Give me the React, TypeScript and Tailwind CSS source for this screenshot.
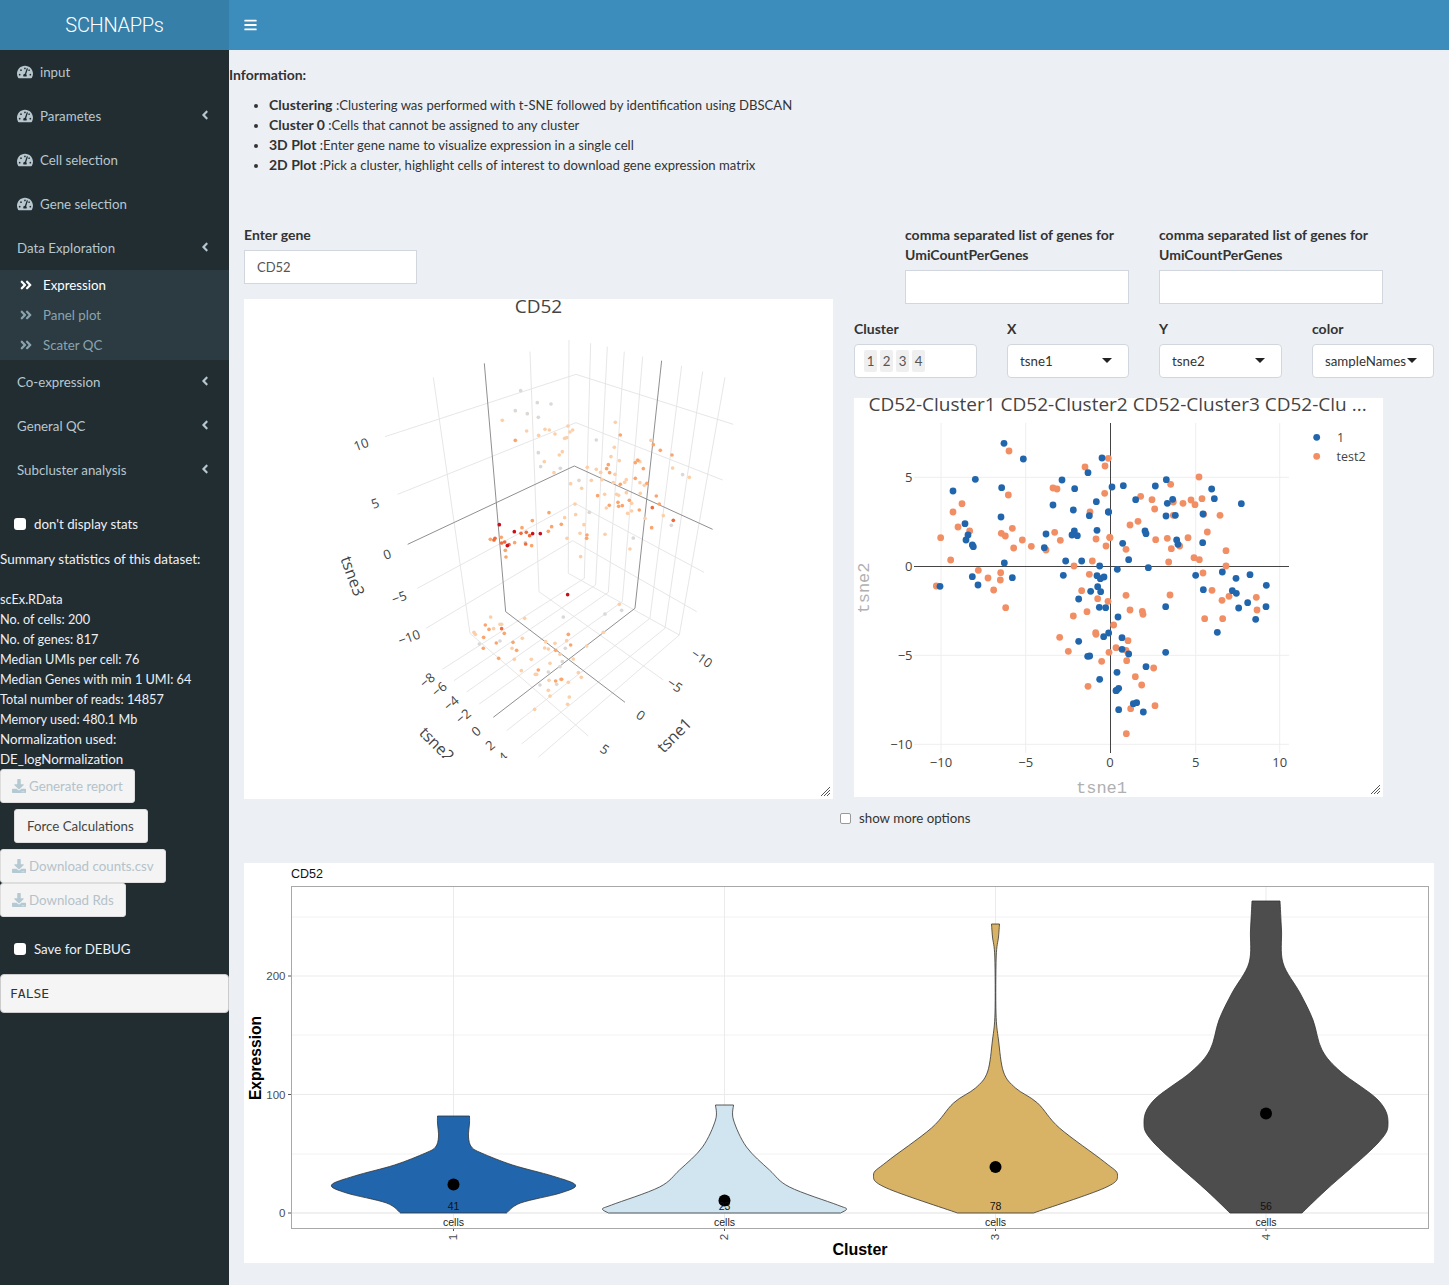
import React from "react";
import { FaAngleDoubleRight, FaAngleLeft, FaBars, FaDownload, FaTachometerAlt } from "react-icons/fa";

type Pt = [number, number];

const BLUE_A: Pt[] = [[462,145],[520,192],[376,253],[309,288],[455,278],[636,255],[674,281],[714,233],[756,189],[609,330],[739,320],[670,345],[718,362],[775,351],[453,366],[345,386],[354,420],[348,435],[367,450],[370,455],[588,417],[673,408],[666,420],[682,422],[741,406],[583,458],[463,504],[647,498],[695,498],[749,513],[367,545],[487,548],[640,541],[741,542],[751,551],[762,546],[384,570],[270,574],[743,575],[722,589],[752,590],[686,612]];
const ORANGE_A: Pt[] = [[477,168],[775,190],[765,213],[705,216],[764,295],[609,279],[621,282],[475,300],[336,326],[309,351],[720,351],[324,396],[359,408],[454,415],[466,423],[487,400],[272,428],[517,435],[614,412],[631,436],[738,432],[491,459],[544,454],[588,465],[768,453],[780,428],[302,495],[727,498],[672,513],[385,526],[452,533],[414,549],[451,555],[718,538],[259,573],[431,585],[695,587],[743,611],[774,619]];
const BLUE_B: Pt[] = [[36,276],[70,272],[166,273],[199,254],[335,282],[343,311],[424,326],[107,314],[218,313],[202,325],[26,351],[198,363],[226,361],[309,357],[135,408],[138,416],[230,435],[234,448],[68,445],[308,443],[86,494],[52,523],[145,518]];
const ORANGE_B: Pt[] = [[297,246],[212,268],[122,304],[156,314],[220,321],[249,325],[273,315],[285,329],[306,311],[164,342],[220,361],[311,358],[360,361],[114,379],[90,390],[322,411],[167,434],[202,430],[264,428],[29,427],[78,463],[214,461],[239,453],[378,467],[282,488],[298,494],[206,501],[378,513]];
const BLUE_C: Pt[] = [[287,46],[367,36],[408,55],[450,44],[499,76],[310,89],[397,92],[409,100],[443,128],[498,140],[416,144],[197,140],[54,171],[467,178],[352,217],[66,233],[66,268],[86,282],[197,277],[138,320],[51,337],[50,391],[56,385],[100,431],[110,428],[56,449],[130,456]];
const ORANGE_C: Pt[] = [[309,39],[336,91],[210,105],[78,106],[366,121],[387,109],[469,112],[471,150],[90,150],[127,154],[129,163],[314,176],[368,176],[41,195],[84,242],[48,263],[78,271],[80,302],[161,324],[106,350],[125,375],[165,437],[92,446],[79,521]];
const BLUE_D: Pt[] = [[748,22],[767,23],[776,99],[761,110],[686,124],[713,169],[719,168],[749,238],[798,272]];
const ORANGE_D: Pt[] = [[467,23],[670,48],[711,35],[629,112],[737,98],[738,103],[655,154],[777,157],[755,184],[714,259]];

const POINTS_3D: { color: string; pts: Pt[] }[] = [
  { color: "#dbd8d5", pts: [[572,152],[622,188],[663,192],[556,212],[592,221],[625,232],[799,300],[625,338],[632,380],[691,385],[1058,404],[747,421],[778,517],[1024,556],[910,594],[586,608],[700,831],[825,822],[875,811],[448,912],[510,903],[706,925],[697,965],[655,996],[630,1035],[680,1033],[690,980]] },
  { color: "#fdcfa8", pts: [[517,241],[590,273],[645,268],[658,270],[675,282],[714,258],[728,270],[720,276],[704,295],[710,293],[626,286],[697,335],[688,345],[643,365],[856,247],[853,322],[843,350],[868,362],[963,301],[1028,384],[1078,412],[772,382],[799,388],[812,397],[855,403],[722,431],[755,445],[784,421],[816,419],[824,463],[850,428],[884,427],[889,419],[889,458],[930,428],[943,436],[931,460],[735,492],[737,524],[704,533],[829,504],[860,463],[866,466],[905,490],[893,520],[905,513],[945,535],[762,554],[750,580],[711,595],[825,583],[900,627],[752,650],[482,831],[510,853],[515,853],[491,866],[432,877],[436,883],[584,835],[577,895],[675,910],[647,905],[710,902],[644,924],[655,927],[690,943],[730,957],[770,918],[820,877],[868,793],[604,958],[553,958],[574,992],[660,970],[616,1003],[620,1003],[745,998],[754,1012],[692,1018],[657,1021],[715,1027],[655,1051],[660,1068],[718,1071],[713,1093],[614,1108],[546,925],[672,398],[922,360],[930,365],[1000,527]] },
  { color: "#fba56d", pts: [[556,301],[871,285],[970,314],[991,331],[1026,345],[916,368],[924,361],[940,386],[835,374],[830,386],[839,398],[871,433],[916,415],[951,430],[803,467],[979,468],[988,492],[864,487],[838,496],[866,499],[877,497],[898,481],[928,510],[965,563],[771,585],[770,595],[657,518],[607,542],[576,563],[694,553],[665,560],[655,574],[481,598],[554,608],[514,592],[526,631],[528,651],[605,617],[466,855],[477,868],[461,892],[499,909],[523,880],[549,907],[560,931],[460,925],[506,955],[677,931],[722,915],[715,883],[625,990],[677,1023],[695,1018]] },
  { color: "#ef6a3c", pts: [[1030,541],[967,503],[589,577],[599,587],[573,580],[587,612],[515,609],[524,606],[537,614],[492,600],[495,595],[515,866]] },
  { color: "#c8101c", pts: [[508,554],[553,575],[631,581],[608,581],[532,617],[713,764]] },
];

const GRID_3D: number[][] = [
  [310,112,420,880],[600,35,627,755],[717,0,715,700],[782,10,763,715],[832,20,797,735],[883,35,835,757],[938,50,877,785],[1055,78,960,835],[1118,95,1005,865],[1185,112,1048,885],
  [165,290,738,103],[203,463,738,248],[262,745,735,490],[288,865,728,602],[738,103,1210,253],[738,248,1178,420],[735,490,1122,697],[728,602,1100,815],
  [763,715,337,988],[797,735,372,1022],[835,757,410,1056],[877,785,448,1092],[960,835,530,1172],[1005,865,575,1212],[1048,885,625,1252],
  [420,880,775,1188],[627,755,1000,1020],[715,700,1048,885],
];
const AXES_3D: number[][] = [[463,70,527,815],[527,815,885,1087],[995,62,915,805],[915,805,490,1132],[233,613,733,378],[733,378,1148,568]];

const LABELS_3D: { t: string; x: number; y: number; r: number; s?: number }[] = [
  { t: "10", x: 361, y: 444, r: -20 }, { t: "5", x: 375, y: 503, r: -20 }, { t: "0", x: 387, y: 554, r: -20 },
  { t: "−5", x: 399, y: 597, r: -20 }, { t: "−10", x: 409, y: 637, r: -20 }, { t: "tsne3", x: 353, y: 576, r: 70, s: 16 },
  { t: "−8", x: 427, y: 680, r: -40 }, { t: "−6", x: 439, y: 689, r: -40 }, { t: "−4", x: 451, y: 703, r: -40 },
  { t: "−2", x: 463, y: 716, r: -40 }, { t: "0", x: 476, y: 731, r: -40 }, { t: "2", x: 490, y: 745, r: -40 }, { t: "4", x: 503, y: 757, r: -40 },
  { t: "tsne2", x: 437, y: 744, r: 45, s: 16 }, { t: "−10", x: 702, y: 658, r: 35 }, { t: "−5", x: 675, y: 685, r: 35 },
  { t: "0", x: 641, y: 715, r: 35 }, { t: "5", x: 605, y: 749, r: 35 }, { t: "tsne1", x: 674, y: 735, r: -45, s: 16 },
];

const VIOLINS: { cx: number; fill: string; n: string; dot: number; prof: Pt[] }[] = [
  { cx: 453.5, fill: "#2166ac", n: "41", dot: 1184.5, prof: [[1116,16],[1123,16],[1137,15],[1147,18],[1153,28],[1165,59],[1176,99],[1185,122],[1193,107],[1203,67],[1213,53]] },
  { cx: 724.5, fill: "#d1e5f0", n: "23", dot: 1200.5, prof: [[1105,9],[1120,9],[1147,22],[1170,45],[1187,65],[1205,113],[1209,122],[1213,116]] },
  { cx: 995.5, fill: "#d8b365", n: "78", dot: 1167, prof: [[924,4],[937,3],[957,0.7],[1013,0.5],[1040,3],[1072,8],[1088,20],[1103,42],[1128,64],[1162,109],[1175,122],[1188,109],[1213,38]] },
  { cx: 1266, fill: "#4d4d4d", n: "56", dot: 1113.5, prof: [[901,14],[930,15.5],[963,17],[993,34],[1020,47],[1050,56],[1072,75],[1100,112],[1122,122],[1143,112],[1190,60],[1213,36]] },
];

// smooth one side of a violin, going through the points in order
function side(pts: Pt[]) {
  let d = "";
  for (let i = 0; i < pts.length - 1; i++) {
    const p0 = pts[Math.max(i - 1, 0)];
    const p1 = pts[i];
    const p2 = pts[i + 1];
    const p3 = pts[Math.min(i + 2, pts.length - 1)];
    d += ` C${p1[0] + (p2[0] - p0[0]) / 6} ${p1[1] + (p2[1] - p0[1]) / 6} ${p2[0] - (p3[0] - p1[0]) / 6} ${p2[1] - (p3[1] - p1[1]) / 6} ${p2[0]} ${p2[1]}`;
  }
  return d;
}

function violinPath(cx: number, prof: Pt[]) {
  const right: Pt[] = prof.map(([y, w]) => [cx + w, y]);
  const left: Pt[] = [...prof].reverse().map(([y, w]) => [cx - w, y]);
  return `M${right[0][0]} ${right[0][1]}${side(right)} L${left[0][0]} ${left[0][1]}${side(left)} Z`;
}

function ResizeHandle() {
  return (
    <svg className="absolute right-[3px] bottom-[3px]" width="9" height="9" viewBox="0 0 9 9">
      <path d="M0 9L9 0M3 9L9 3M6 9L9 6" stroke="#555" strokeWidth="1" fill="none" />
    </svg>
  );
}

function NavItem({ label, icon, arrow }: { label: string; icon?: boolean; arrow?: boolean }) {
  return (
    <div className="h-[44px] flex items-center pl-[17px] pr-[19px] text-[#b8c7ce]">
      {icon && <FaTachometerAlt className="w-[16px] h-[16px] mr-[7px]" />}
      <span className="flex-1">{label}</span>
      {arrow && <FaAngleLeft className="w-[10px] h-[14px] -mt-[3px]" />}
    </div>
  );
}

function SubItem({ label, active }: { label: string; active?: boolean }) {
  return (
    <div className={`h-[30px] flex items-center pl-[19px] ${active ? "text-white" : "text-[#8aa4af]"}`}>
      <FaAngleDoubleRight className="w-[14px] h-[14px] mr-[10px] -mt-[1px]" />
      {label}
    </div>
  );
}

function SideButton({ label, disabled, className }: { label: string; disabled?: boolean; className: string }) {
  return (
    <div className={`h-[34px] flex items-center bg-[#f4f4f4] border border-[#ddd] rounded-[3px] ${disabled ? "text-[#b5c2c9]" : "text-[#444]"} ${className}`}>
      {disabled && <FaDownload className="w-[14px] h-[14px] mr-[3px] text-[#b5c9d3]" />}
      {label}
    </div>
  );
}

function Sidebar() {
  return (
    <aside className="w-[229px] shrink-0 bg-[#222d32]">
      <div className="h-[50px] bg-[#367fa9] flex items-center justify-center text-white text-[20px] font-['Roboto',sans-serif] font-light tracking-[-0.3px]">SCHNAPPs</div>
      <NavItem label="input" icon />
      <NavItem label="Parametes" icon arrow />
      <NavItem label="Cell selection" icon />
      <NavItem label="Gene selection" icon />
      <NavItem label="Data Exploration" arrow />
      <div className="bg-[#2c3b41]">
        <SubItem label="Expression" active />
        <SubItem label="Panel plot" />
        <SubItem label="Scater QC" />
      </div>
      <NavItem label="Co-expression" arrow />
      <NavItem label="General QC" arrow />
      <NavItem label="Subcluster analysis" arrow />
      <label className="mt-[22px] h-[20px] flex items-center pl-[14px] text-[#ecf0f5]">
        <span className="w-[12px] h-[12px] bg-white rounded-[3px] mr-[8px]" />
        don't display stats
      </label>
      <div className="mt-[15px] text-[#ecf0f5] whitespace-nowrap">
        <div className="text-[13.45px]">Summary statistics of this dataset:</div>
        <div className="h-[20px]" />
        <div className="text-[12.7px]">scEx.RData</div>
        <div className="text-[12.7px]">No. of cells: 200</div>
        <div className="text-[12.7px]">No. of genes: 817</div>
        <div className="text-[12.7px]">Median UMIs per cell: 76</div>
        <div className="text-[12.7px]">Median Genes with min 1 UMI: 64</div>
        <div className="text-[12.7px]">Total number of reads: 14857</div>
        <div className="text-[12.7px]">Memory used: 480.1 Mb</div>
        <div>Normalization used:</div>
        <div>DE_logNormalization</div>
      </div>
      <SideButton label="Generate report" disabled className="w-[135px] pl-[11px]" />
      <SideButton label="Force Calculations" className="w-[134px] ml-[14px] mt-[6px] pl-[12px]" />
      <SideButton label="Download counts.csv" disabled className="w-[166px] mt-[6px] pl-[11px]" />
      <SideButton label="Download Rds" disabled className="w-[126px] pl-[11px]" />
      <label className="mt-[22px] h-[20px] flex items-center pl-[14px] text-[#ecf0f5]">
        <span className="w-[12px] h-[12px] bg-white rounded-[3px] mr-[8px]" />
        Save for DEBUG
      </label>
      <div className="mt-[15px] h-[39px] flex items-center pl-[9px] bg-[#f5f5f5] border border-[#ccc] rounded-[4px] text-[#333] text-[13px] font-['DejaVu_Sans_Mono',monospace]">FALSE</div>
    </aside>
  );
}

function Plot3D() {
  return (
    <div className="relative h-[500px] bg-white">
      <svg className="block overflow-hidden" width="589" height="459" viewBox="244 299 589 459">
        <text x="538.5" y="312.5" textAnchor="middle" fontSize="19" fill="#444" fontFamily="'Open Sans', sans-serif">CD52</text>
        <g transform="translate(330 340) scale(0.3333)">
          {GRID_3D.map((l, i) => <line key={i} x1={l[0]} y1={l[1]} x2={l[2]} y2={l[3]} stroke="#e2e2e2" strokeWidth="2.6" />)}
          {AXES_3D.map((l, i) => <line key={i} x1={l[0]} y1={l[1]} x2={l[2]} y2={l[3]} stroke="#8f8f8f" strokeWidth="3" />)}
          {POINTS_3D.map((g) => g.pts.map((p, i) => <circle key={g.color + i} cx={p[0]} cy={p[1]} r="5.5" fill={g.color} />))}
        </g>
        {LABELS_3D.map((l, i) => (
          <text key={i} x={l.x} y={l.y} textAnchor="middle" dominantBaseline="central" fontSize={l.s ?? 13} fill="#444" fontFamily="'Open Sans', sans-serif" transform={`rotate(${l.r} ${l.x} ${l.y})`}>{l.t}</text>
        ))}
      </svg>
      <ResizeHandle />
    </div>
  );
}

function dots(pts: Pt[], ox: number, oy: number, color: string) {
  return pts.map((p, i) => <circle key={color + ox + oy + i} cx={ox + p[0] / 3} cy={oy + p[1] / 3} r="3.4" fill={color} />);
}

function Scatter() {
  const blue = "#2166ac";
  const orange = "#f28e64";
  const axis = { fontSize: 13, fill: "#444", fontFamily: "'Open Sans', sans-serif" };
  return (
    <div className="relative w-[529px] h-[399px] ml-[15px] bg-white">
      <svg className="block" width="529" height="399" viewBox="854 398 529 399">
        <text x="868.5" y="411" fontSize="19" fill="#444" fontFamily="'Open Sans', sans-serif">CD52-Cluster1 CD52-Cluster2 CD52-Cluster3 CD52-Clu ...</text>
        {[941, 1025.7, 1195.7, 1279.7].map((x) => <line key={x} x1={x} x2={x} y1="423" y2="753" stroke="#eee" />)}
        {[477.3, 655.3, 744.3].map((y) => <line key={y} x1="914" x2="1289" y1={y} y2={y} stroke="#eee" />)}
        <line x1="914" x2="1289" y1="566.5" y2="566.5" stroke="#444" />
        <line x1="1110.5" x2="1110.5" y1="423" y2="753" stroke="#444" />
        {dots(ORANGE_A, 850, 395, orange)}
        {dots(BLUE_A, 850, 395, blue)}
        {dots(ORANGE_B, 1100, 395, orange)}
        {dots(BLUE_B, 1100, 395, blue)}
        {dots(ORANGE_C, 1100, 560, orange)}
        {dots(BLUE_C, 1100, 560, blue)}
        {dots(ORANGE_D, 850, 600, orange)}
        {dots(BLUE_D, 850, 600, blue)}
        {[["5", 477], ["0", 566], ["−5", 655], ["−10", 744]].map(([t, y]) => (
          <text key={t} x="912.5" y={Number(y) + 4.5} textAnchor="end" {...axis}>{t}</text>
        ))}
        {[["−10", 941], ["−5", 1025.7], ["0", 1110], ["5", 1195.7], ["10", 1279.7]].map(([t, x]) => (
          <text key={t} x={x} y="767" textAnchor="middle" {...axis}>{t}</text>
        ))}
        <text x="1101.5" y="793" textAnchor="middle" fontSize="17" fill="#b0b0b0" fontFamily="'Liberation Mono', monospace">tsne1</text>
        <text x="869" y="588" textAnchor="middle" fontSize="17" fill="#b0b0b0" fontFamily="'Liberation Mono', monospace" transform="rotate(-90 869 588)">tsne2</text>
        <circle cx="1316.7" cy="437.3" r="3.4" fill={blue} />
        <circle cx="1316.7" cy="456.3" r="3.4" fill={orange} />
        <text x="1337" y="442" fontSize="12.5" fill="#444" fontFamily="'Open Sans', sans-serif">1</text>
        <text x="1336.5" y="461" fontSize="12.5" fill="#444" fontFamily="'Open Sans', sans-serif">test2</text>
      </svg>
      <ResizeHandle />
    </div>
  );
}

function ViolinPlot() {
  const font = "'Liberation Sans', sans-serif";
  return (
    <div className="w-[1190px] h-[400px] ml-[15px] mt-[35px] bg-white">
      <svg className="block" width="1190" height="400" viewBox="244 863 1190 400">
        <text x="291" y="877.5" fontSize="12.5" fill="#111" fontFamily={font}>CD52</text>
        {[917, 1035, 1154].map((y) => <line key={y} x1="291" x2="1428" y1={y} y2={y} stroke="#f2f2f2" />)}
        {[976, 1094.5].map((y) => <line key={y} x1="291" x2="1428" y1={y} y2={y} stroke="#ebebeb" />)}
        <line x1="291" x2="1428" y1="1213" y2="1213" stroke="#ebebeb" strokeWidth="1.5" />
        {VIOLINS.map((v) => <line key={v.cx} x1={v.cx} x2={v.cx} y1="886" y2="1228" stroke="#ebebeb" />)}
        {VIOLINS.map((v) => (
          <g key={v.n}>
            <path d={violinPath(v.cx, v.prof)} fill={v.fill} stroke="#333" strokeWidth="0.8" />
            <circle cx={v.cx} cy={v.dot} r="6" fill="#000" />
            <text x={v.cx} y="1210" textAnchor="middle" fontSize="10.5" fill="#111" fontFamily={font}>{v.n}</text>
            <text x={v.cx} y="1226" textAnchor="middle" fontSize="10.5" fill="#222" fontFamily={font}>cells</text>
            <line x1={v.cx} x2={v.cx} y1="1228" y2="1231" stroke="#555" />
          </g>
        ))}
        <rect x="291.5" y="886.5" width="1137" height="342" fill="none" stroke="#a8a8a8" />
        {[["200", 976], ["100", 1094.5], ["0", 1213]].map(([t, y]) => (
          <g key={t}>
            <text x="285.5" y={Number(y) + 4} textAnchor="end" fontSize="11.5" fill="#4d4d4d" fontFamily={font}>{t}</text>
            <line x1="288" x2="291" y1={y} y2={y} stroke="#555" />
          </g>
        ))}
        {VIOLINS.map((v, i) => (
          <text key={v.cx} x={v.cx + 3.5} y="1237" textAnchor="middle" fontSize="11.5" fill="#4d4d4d" fontFamily={font} transform={`rotate(-90 ${v.cx + 3.5} 1237)`}>{i + 1}</text>
        ))}
        <text x="860" y="1254.5" textAnchor="middle" fontSize="16" fontWeight="bold" fill="#000" fontFamily={font}>Cluster</text>
        <text x="260.5" y="1058" textAnchor="middle" fontSize="15.6" fontWeight="bold" fill="#000" fontFamily={font} transform="rotate(-90 260.5 1058)">Expression</text>
      </svg>
    </div>
  );
}

function Select({ value, className }: { value: string; className: string }) {
  return (
    <div className={`relative h-[34px] flex items-center pl-[12px] bg-white border border-[#d2d6de] rounded-[4px] ${className}`}>
      {value}
      <span className="absolute right-[16px] top-[13px] w-0 h-0 border-x-[5.5px] border-x-transparent border-t-[5.5px] border-t-[#222]" />
    </div>
  );
}

export default function App() {
  return (
    <div className="flex h-[1285px] overflow-hidden bg-[#ecf0f5] font-['Lato',sans-serif] text-[13.3px] leading-[20px] text-[#333] [&_b]:text-[14px]">
      <Sidebar />
      <main className="flex-1 min-w-0">
        <header className="h-[50px] bg-[#3c8dbc] flex items-center pl-[15px]">
          <FaBars className="w-[13px] h-[14px] text-white" />
        </header>
        <div className="pt-[15px]">
          <b>Information:</b>
          <ul className="mt-[10px] pl-[40px] list-disc text-[13.1px]">
            <li><b>Clustering </b>:Clustering was performed with t-SNE followed by identification using DBSCAN</li>
            <li><b>Cluster 0 </b>:Cells that cannot be assigned to any cluster</li>
            <li><b>3D Plot </b>:Enter gene name to visualize expression in a single cell</li>
            <li><b>2D Plot </b>:Pick a cluster, highlight cells of interest to download gene expression matrix</li>
          </ul>
        </div>
        <div className="flex mt-[50px]">
          <div className="w-[589px] ml-[15px]">
            <b className="block">Enter gene</b>
            <div className="mt-[5px] mb-[15px] w-[173px] h-[34px] flex items-center pl-[12px] bg-white border border-[#d2d6de] text-[#555] text-[13px]">CD52</div>
            <Plot3D />
          </div>
          <div className="ml-[6px] w-[595px]">
            <div className="flex gap-[30px] pl-[66px]">
              {[0, 1].map((k) => (
                <div key={k} className="w-[224px]">
                  <b className="block">comma separated list of genes for UmiCountPerGenes</b>
                  <div className="mt-[5px] h-[34px] bg-white border border-[#d2d6de]" />
                </div>
              ))}
            </div>
            <div className="flex gap-[30px] pl-[15px] mt-[15px]">
              <div className="w-[123px]">
                <b className="block mb-[5px]">Cluster</b>
                <div className="h-[34px] flex items-center gap-[3px] pl-[9px] bg-white border border-[#d2d6de] rounded-[4px] text-[#555]">
                  {["1", "2", "3", "4"].map((c) => <span key={c} className="w-[13px] h-[22px] leading-[22px] text-center bg-[#efefef] rounded-[2px]">{c}</span>)}
                </div>
              </div>
              <div className="w-[122px]">
                <b className="block mb-[5px]">X</b>
                <Select value="tsne1" className="w-full" />
              </div>
              <div className="w-[123px]">
                <b className="block mb-[5px]">Y</b>
                <Select value="tsne2" className="w-full" />
              </div>
              <div className="w-[122px]">
                <b className="block mb-[5px]">color</b>
                <Select value="sampleNames" className="w-full" />
              </div>
            </div>
            <div className="mt-[20px]"><Scatter /></div>
            <label className="mt-[11px] h-[20px] flex items-center pl-[1px]">
              <span className="w-[11px] h-[11px] bg-white border border-[#999] rounded-[2px] mr-[8px]" />
              show more options
            </label>
          </div>
        </div>
        <ViolinPlot />
      </main>
    </div>
  );
}
